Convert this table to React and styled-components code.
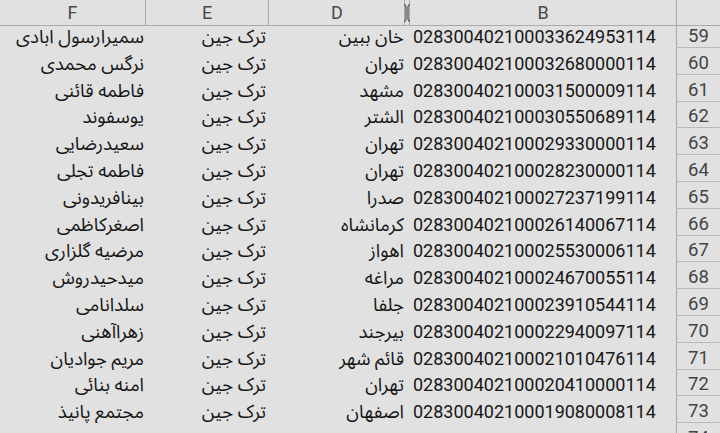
import React from "react"
import styled, { createGlobalStyle } from "styled-components"

const GlobalStyle = createGlobalStyle`
  html, body {
    margin: 0;
    padding: 0;
    background: #e1e1e1;
    overflow: hidden;
  }
`

const COLS = "145px 123px 137px 5px 266px 44px"

const Sheet = styled.div`
  width: 720px;
  height: 433px;
  overflow: hidden;
  background: #e1e1e1;
  font-family: Roboto, "Noto Sans Arabic", "DejaVu Sans", sans-serif;
  color: #161616;
`

const HeaderRow = styled.div`
  display: grid;
  grid-template-columns: ${COLS};
  height: 26px;
  border-bottom: 1px solid #a9a9a9;
  box-sizing: border-box;
`

const HeaderCell = styled.div`
  display: flex;
  align-items: flex-end;
  justify-content: center;
  font-size: 18px;
  line-height: 18px;
  padding-bottom: 3px;
  box-sizing: border-box;
  color: #4a4a4a;
  border-left: ${(p) => (p.$first ? "none" : "1px solid #a9a9a9")};
`

const HiddenCol = styled.div`
  position: relative;
  border-left: 1px solid #a9a9a9;
  border-right: 1px solid #a9a9a9;
  margin-left: -1px;

  svg {
    position: absolute;
    left: -3px;
    top: 3px;
  }
`

const Body = styled.div`
  height: 407px;
  overflow: hidden;
`

const Rows = styled.div`
  margin-top: -4.8px;
`

const Row = styled.div`
  display: grid;
  grid-template-columns: ${COLS};
  height: 26.8px;
`

const Cell = styled.div`
  display: flex;
  align-items: flex-end;
  justify-content: ${(p) => (p.$align === "left" ? "flex-start" : "flex-end")};
  padding: 0 ${(p) => p.$pr || 0}px 2px ${(p) => p.$pl || 0}px;
  font-size: ${(p) => (p.$align === "left" ? 18 : 18.5)}px;
  line-height: 18px;
  white-space: nowrap;
  overflow: hidden;
  box-sizing: border-box;
`

const Text = styled.span`
  direction: ${(p) => (p.$rtl ? "rtl" : "ltr")};
`

const RowNum = styled.div`
  display: flex;
  align-items: flex-end;
  justify-content: center;
  padding-bottom: 2px;
  font-size: 18.5px;
  line-height: 18px;
  color: #444;
  border-left: 1px solid #a9a9a9;
  border-bottom: 1px solid #b9b9b9;
  box-sizing: border-box;
`

const rows = [
  [59, "سمیرارسول ابادی", "خان ببین", "028300402100033624953114"],
  [60, "نرگس محمدی", "تهران", "028300402100032680000114"],
  [61, "فاطمه قائنی", "مشهد", "028300402100031500009114"],
  [62, "یوسفوند", "الشتر", "028300402100030550689114"],
  [63, "سعیدرضایی", "تهران", "028300402100029330000114"],
  [64, "فاطمه تجلی", "تهران", "028300402100028230000114"],
  [65, "بینافریدونی", "صدرا", "028300402100027237199114"],
  [66, "اصغرکاظمی", "کرمانشاه", "028300402100026140067114"],
  [67, "مرضیه گلزاری", "اهواز", "028300402100025530006114"],
  [68, "میدحیدروش", "مراغه", "028300402100024670055114"],
  [69, "سلدانامی", "جلفا", "028300402100023910544114"],
  [70, "زهراآهنی", "بیرجند", "028300402100022940097114"],
  [71, "مریم جوادیان", "قائم شهر", "028300402100021010476114"],
  [72, "امنه بنائی", "تهران", "028300402100020410000114"],
  [73, "مجتمع پانیذ", "اصفهان", "028300402100019080008114"],
  [74, "", "", ""],
]

const HiddenMark = () => (
  <svg width="10" height="20" viewBox="0 0 10 20">
    <path d="M2 1.5 Q4 1.5 4 4 V16 Q4 18.5 2 18.5" fill="none" stroke="#333" strokeWidth="1" />
    <path d="M8 1.5 Q6 1.5 6 4 V16 Q6 18.5 8 18.5" fill="none" stroke="#333" strokeWidth="1" />
  </svg>
)

export default function App() {
  return (
    <Sheet>
      <GlobalStyle />
      <HeaderRow>
        <HeaderCell $first>F</HeaderCell>
        <HeaderCell>E</HeaderCell>
        <HeaderCell>D</HeaderCell>
        <HiddenCol>
          <HiddenMark />
        </HiddenCol>
        <HeaderCell $first>B</HeaderCell>
        <HeaderCell />
      </HeaderRow>
      <Body>
        <Rows>
          {rows.map(([n, name, city, code]) => (
            <Row key={n}>
              <Cell $pr={1}>
                <Text $rtl>{name}</Text>
              </Cell>
              <Cell $pr={2}>
                <Text $rtl>{name ? "ترک جین" : ""}</Text>
              </Cell>
              <Cell $pr={1}>
                <Text $rtl>{city}</Text>
              </Cell>
              <div />
              <Cell $align="left" $pl={3}>
                <Text>{code}</Text>
              </Cell>
              <RowNum>{n}</RowNum>
            </Row>
          ))}
        </Rows>
      </Body>
    </Sheet>
  )
}
